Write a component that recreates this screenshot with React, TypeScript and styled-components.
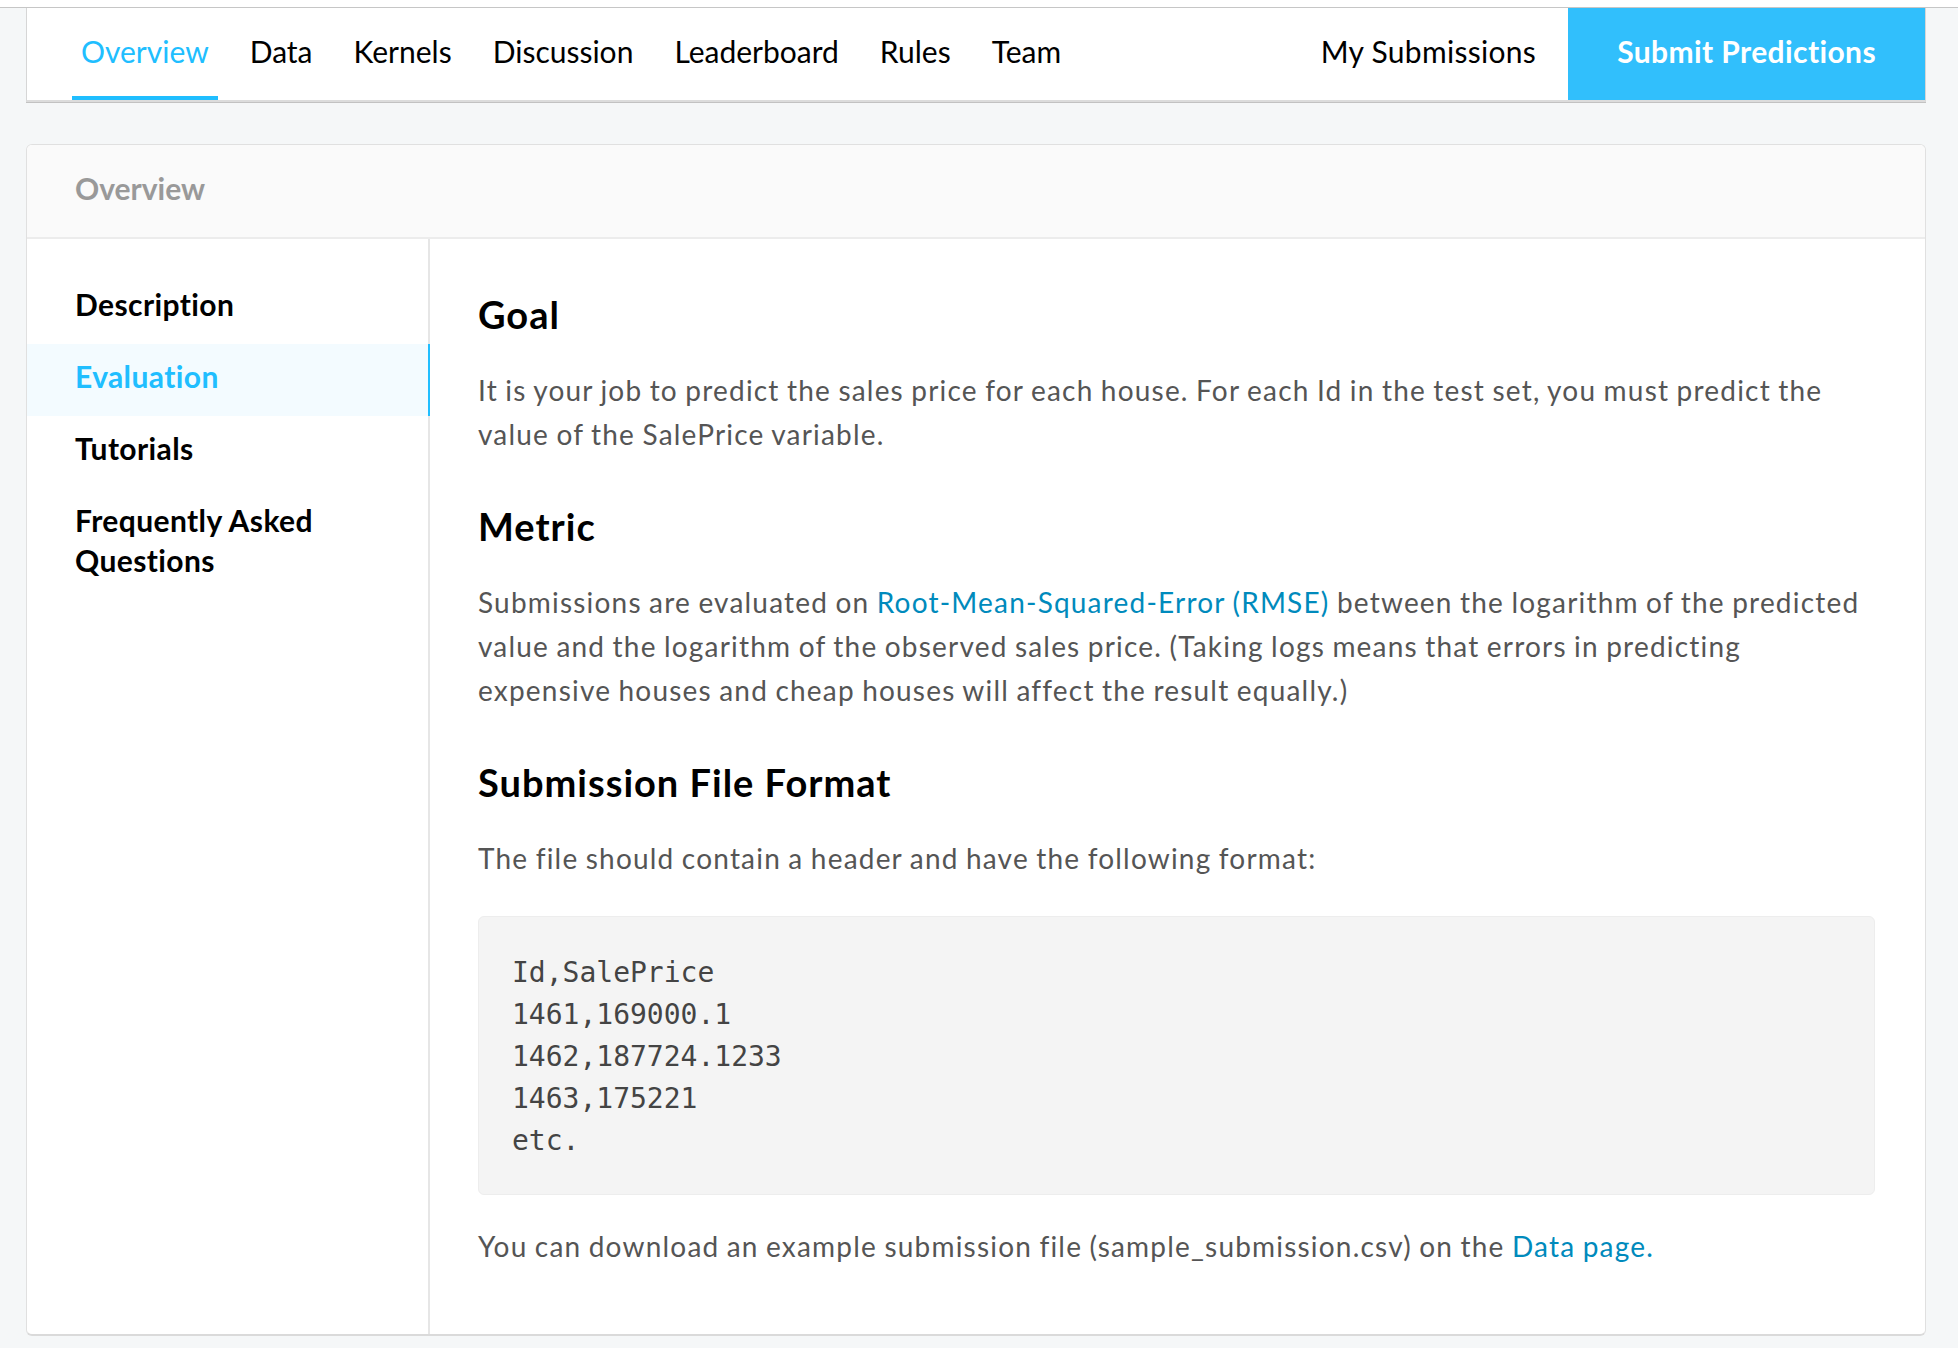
import React from "react";
import styled, { createGlobalStyle } from "styled-components";

const GlobalStyle = createGlobalStyle`
  html, body {
    margin: 0;
    padding: 0;
    background-color: #f5f7f8;
    font-family: Lato, "Liberation Sans", sans-serif;
    -webkit-font-smoothing: antialiased;
  }
`;

const TopStrip = styled.div`
  height: 7px;
  background-color: #ffffff;
  border-bottom: 1px solid #c6c6c6;
`;

const Page = styled.div`
  padding: 0 32px 14px 26px;
`;

const NavBar = styled.nav`
  display: flex;
  align-items: stretch;
  height: 92px;
  background-color: #ffffff;
  border-left: 1px solid #d6d6d6;
  border-right: 1px solid #d6d6d6;
  border-bottom: 2px solid #dcdcdc;
  box-shadow: 0 1px 0 #c2c2c2;
  padding-left: 45px;
`;

const Tabs = styled.div`
  display: flex;
  gap: 23px;
  flex: 1;
`;

const Tab = styled.a<{ active?: boolean }>`
  box-sizing: border-box;
  height: 92px;
  padding: 25px 9px 0;
  font-size: 30px;
  line-height: 36px;
  color: ${({ active }) => (active ? "#20beff" : "#000000")};
  border-bottom: 4px solid ${({ active }) => (active ? "#20beff" : "transparent")};
  cursor: pointer;
`;

const MySubmissions = styled(Tab)`
  padding-right: 0;
  margin-right: 32px;
  letter-spacing: 0.3px;
`;

const SubmitButton = styled.button`
  box-sizing: border-box;
  display: flex;
  align-items: flex-start;
  height: 92px;
  padding: 25px 49px 0;
  border: none;
  background-color: #31bffc;
  color: #ffffff;
  font-family: inherit;
  font-size: 30px;
  line-height: 36px;
  font-weight: 700;
  letter-spacing: 0.4px;
  cursor: pointer;
`;

const Card = styled.section`
  margin-top: 42px;
  background-color: #ffffff;
  border: 1px solid #e0e0e0;
  border-bottom: 2px solid #dadada;
  border-radius: 6px;
  overflow: hidden;
`;

const CardHeader = styled.header`
  padding: 25px 48px 31px;
  background-color: #fafafa;
  border-bottom: 2px solid #ececec;
  font-size: 30px;
  line-height: 36px;
  font-weight: 700;
  color: #999999;
`;

const CardBody = styled.div`
  display: flex;
  align-items: stretch;
`;

const Sidebar = styled.aside`
  width: 401px;
  flex-shrink: 0;
  padding-top: 33px;
  border-right: 2px solid #e6e6e6;
`;

const SideItem = styled.a<{ active?: boolean }>`
  display: block;
  padding: 12px 48px 20px;
  margin-right: -2px;
  font-size: 30px;
  line-height: 40px;
  font-weight: 700;
  letter-spacing: 0.4px;
  color: ${({ active }) => (active ? "#20beff" : "#000000")};
  background-color: ${({ active }) => (active ? "#f3fbff" : "transparent")};
  border-right: 2px solid ${({ active }) => (active ? "#20beff" : "transparent")};
  cursor: pointer;
`;

const Content = styled.article`
  flex: 1;
  min-width: 0;
  padding: 51px 50px 66px 48px;
`;

const Heading = styled.h2`
  margin: 46px 0 30px;
  font-size: 38px;
  line-height: 48px;
  font-weight: 700;
  letter-spacing: 1px;
  color: #000000;

  &:first-child {
    margin-top: 0;
  }
`;

const Paragraph = styled.p`
  margin: 0;
  font-size: 28px;
  line-height: 44px;
  letter-spacing: 1.2px;
  word-spacing: -1px;
  color: #555555;
`;

const Link = styled.a`
  color: #008abc;
  text-decoration: none;
`;

const CodeBlock = styled.pre`
  margin: 36px 0 29px;
  padding: 35px 33px 32px;
  background-color: #f4f4f4;
  border: 1px solid #ededed;
  border-radius: 6px;
  font-family: "DejaVu Sans Mono", "Liberation Mono", monospace;
  font-size: 28px;
  line-height: 42px;
  color: #444444;
`;

const tabs = ["Overview", "Data", "Kernels", "Discussion", "Leaderboard", "Rules", "Team"];
const sideItems = ["Description", "Evaluation", "Tutorials", "Frequently Asked Questions"];

const App: React.FC = () => {
  return (
    <>
      <GlobalStyle />
      <TopStrip />
      <Page>
        <NavBar>
          <Tabs>
            {tabs.map((t) => (
              <Tab key={t} active={t === "Overview"}>
                {t}
              </Tab>
            ))}
          </Tabs>
          <MySubmissions>My Submissions</MySubmissions>
          <SubmitButton>Submit Predictions</SubmitButton>
        </NavBar>

        <Card>
          <CardHeader>Overview</CardHeader>
          <CardBody>
            <Sidebar>
              {sideItems.map((s) => (
                <SideItem key={s} active={s === "Evaluation"}>
                  {s}
                </SideItem>
              ))}
            </Sidebar>
            <Content>
              <Heading>Goal</Heading>
              <Paragraph>
                It is your job to predict the sales price for each house. For each Id in the test
                set, you must predict the value of the SalePrice variable.
              </Paragraph>

              <Heading>Metric</Heading>
              <Paragraph>
                Submissions are evaluated on{" "}
                <Link>Root-Mean-Squared-Error (RMSE)</Link> between the logarithm of the predicted
                value and the logarithm of the observed sales price. (Taking logs means that errors
                in predicting expensive houses and cheap houses will affect the result equally.)
              </Paragraph>

              <Heading>Submission File Format</Heading>
              <Paragraph>The file should contain a header and have the following format:</Paragraph>
              <CodeBlock>
                {"Id,SalePrice\n1461,169000.1\n1462,187724.1233\n1463,175221\netc."}
              </CodeBlock>
              <Paragraph>
                You can download an example submission file (sample_submission.csv) on the{" "}
                <Link>Data page.</Link>
              </Paragraph>
            </Content>
          </CardBody>
        </Card>
      </Page>
    </>
  );
};

export default App;
